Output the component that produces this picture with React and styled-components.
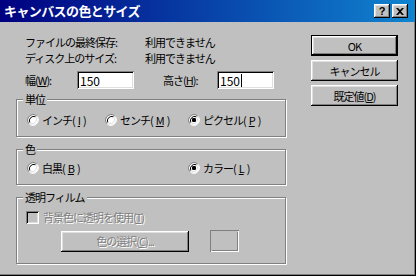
import React from "react";
import styled, { createGlobalStyle } from "styled-components";

const GlobalStyle = createGlobalStyle`
  html, body {
    margin: 0;
    padding: 0;
    background: #c0c0c0;
  }
  body {
    font-family: "Noto Sans CJK JP", "Noto Sans", sans-serif;
    font-size: 11px;
    color: #000;
  }
`;

const Window = styled.div`
  width: 416px;
  height: 276px;
  box-sizing: border-box;
  background: #c0c0c0;
  display: flex;
  flex-direction: column;
  border-right: 1px solid #000;
  border-bottom: 1px solid #000;
  box-shadow: inset -1px -1px #808080;
`;

const TitleBar = styled.div`
  height: 22px;
  flex: none;
  display: flex;
  align-items: center;
  justify-content: space-between;
  padding: 0 7px 0 4px;
  background: linear-gradient(to right, #000080, #1084d0);
  color: #fff;
`;

const TitleText = styled.span`
  font-size: 13px;
  font-weight: 700;
  letter-spacing: -0.6px;
  line-height: 22px;
`;

const CaptionButtons = styled.div`
  display: flex;
  gap: 2px;
`;

const CaptionButton = styled.div`
  width: 16px;
  height: 14px;
  box-sizing: border-box;
  background: #c0c0c0;
  color: #000;
  display: flex;
  align-items: center;
  justify-content: center;
  font-family: "Liberation Sans", sans-serif;
  font-size: 11px;
  font-weight: 700;
  box-shadow: inset -1px -1px #000, inset 1px 1px #fff, inset -2px -2px #808080,
    inset 2px 2px #dfdfdf;
`;

const Body = styled.div`
  flex: 1;
  display: grid;
  grid-template-columns: 270px 87px;
  column-gap: 25px;
  align-items: start;
  padding: 12px 0 0 16px;
  letter-spacing: -1px;
`;

const LeftCol = styled.div`
  display: flex;
  flex-direction: column;
`;

const Info = styled.div`
  display: grid;
  grid-template-columns: 120px auto;
  padding-left: 9px;
  line-height: 16px;
`;

const SizeRow = styled.div`
  display: flex;
  align-items: center;
  height: 18px;
  margin-top: 5px;
  padding-left: 9px;
`;

const FieldLabel = styled.span`
  width: ${(p) => p.$w}px;
  flex: none;
`;

const TextBox = styled.div`
  width: 57px;
  height: 18px;
  flex: none;
  box-sizing: border-box;
  display: flex;
  align-items: center;
  padding-left: 3px;
  background: #fff;
  font-size: 12px;
  letter-spacing: 0;
  box-shadow: inset 1px 1px #808080, inset -1px -1px #fff, inset 2px 2px #000,
    inset -2px -2px #dfdfdf;
`;

const Caret = styled.span`
  width: 1px;
  height: 13px;
  margin-left: 1px;
  background: #000;
`;

const Gap = styled.span`
  width: ${(p) => p.$w}px;
  flex: none;
`;

const Group = styled.fieldset`
  margin: ${(p) => p.$mt}px 0 0;
  padding: ${(p) => p.$pad};
  width: 270px;
  box-sizing: border-box;
  min-width: 0;
  border: 1px solid #808080;
  box-shadow: inset 1px 1px #fff, 1px 1px #fff;
`;

const Legend = styled.legend`
  margin-left: 6px;
  padding: 0 2px;
  line-height: 14px;
  background: #c0c0c0;
`;

const Options = styled.div`
  display: grid;
  grid-template-columns: ${(p) => p.$cols};
  padding-left: 10px;
  height: 14px;
  align-items: center;
`;

const Option = styled.label`
  display: flex;
  align-items: center;
  gap: 3px;
  white-space: nowrap;
`;

const CheckRow = styled.div`
  display: flex;
  align-items: center;
  gap: 4px;
  height: 14px;
  padding-left: 9px;
`;

const CheckBox = styled.span`
  width: 13px;
  height: 13px;
  flex: none;
  box-sizing: border-box;
  background: #c0c0c0;
  box-shadow: inset 1px 1px #808080, inset -1px -1px #fff, inset 2px 2px #000,
    inset -2px -2px #dfdfdf;
`;

const Disabled = styled.span`
  color: #808080;
  text-shadow: 1px 1px #fff;
`;

const PickRow = styled.div`
  display: flex;
  align-items: center;
  gap: 21px;
  margin-top: 6px;
  padding-left: 44px;
`;

const Button = styled.div`
  width: ${(p) => p.$w || 87}px;
  height: 21px;
  box-sizing: border-box;
  display: flex;
  align-items: center;
  justify-content: center;
  background: #c0c0c0;
  white-space: nowrap;
  box-shadow: ${(p) =>
    p.$default
      ? "inset 0 0 0 1px #000, inset -2px -2px #000, inset 2px 2px #fff, inset -3px -3px #808080, inset 3px 3px #dfdfdf"
      : "inset -1px -1px #000, inset 1px 1px #fff, inset -2px -2px #808080, inset 2px 2px #dfdfdf"};
`;

const Swatch = styled.div`
  width: 29px;
  height: 22px;
  box-sizing: border-box;
  box-shadow: inset 1px 1px #808080, inset -1px -1px #fff, inset 2px 2px #c0c0c0,
    inset -2px -2px #808080;
`;

const RightCol = styled.div`
  display: flex;
  flex-direction: column;
  gap: 4px;
  margin-top: 1px;
`;

function Radio({ checked }) {
  return (
    <svg width="12" height="12" viewBox="0 0 12 12">
      <circle cx="6" cy="6" r="5" fill="#fff" />
      <path d="M1.8 9.5 A5.5 5.5 0 0 1 9.5 1.8" fill="none" stroke="#808080" />
      <path d="M2.8 8.5 A4.3 4.3 0 0 1 8.5 2.8" fill="none" stroke="#000" />
      <path d="M10.2 2.5 A5.5 5.5 0 0 1 2.5 10.2" fill="none" stroke="#fff" />
      <path d="M9.2 3.5 A4.3 4.3 0 0 1 3.5 9.2" fill="none" stroke="#dfdfdf" />
      {checked && <rect x="4" y="4" width="4" height="4" rx="1.2" fill="#000" />}
    </svg>
  );
}

function CloseGlyph() {
  return (
    <svg width="8" height="7" viewBox="0 0 8 7">
      <path d="M0 0h2l2 2 2-2h2L5 3.5 8 7H6L4 5 2 7H0l3-3.5z" fill="#000" />
    </svg>
  );
}

export default function App() {
  return (
    <>
      <GlobalStyle />
      <Window>
        <TitleBar>
          <TitleText>キャンバスの色とサイズ</TitleText>
          <CaptionButtons>
            <CaptionButton>?</CaptionButton>
            <CaptionButton>
              <CloseGlyph />
            </CaptionButton>
          </CaptionButtons>
        </TitleBar>
        <Body>
          <LeftCol>
            <Info>
              <span>ファイルの最終保存:</span>
              <span>利用できません</span>
              <span>ディスク上のサイズ:</span>
              <span>利用できません</span>
            </Info>
            <SizeRow>
              <FieldLabel $w={52}>幅(<u>W</u>):</FieldLabel>
              <TextBox>150</TextBox>
              <Gap $w={29} />
              <FieldLabel $w={54}>高さ(<u>H</u>):</FieldLabel>
              <TextBox>
                150
                <Caret />
              </TextBox>
            </SizeRow>

            <Group $mt={3} $pad="6px 0 10px">
              <Legend>単位</Legend>
              <Options $cols="78px 83px auto">
                <Option>
                  <Radio />
                  インチ(<u>I</u>)
                </Option>
                <Option>
                  <Radio />
                  センチ(<u>M</u>)
                </Option>
                <Option>
                  <Radio checked />
                  ピクセル(<u>P</u>)
                </Option>
              </Options>
            </Group>

            <Group $mt={5} $pad="4px 0 10px">
              <Legend>色</Legend>
              <Options $cols="161px auto">
                <Option>
                  <Radio />
                  白黒(<u>B</u>)
                </Option>
                <Option>
                  <Radio checked />
                  カラー(<u>L</u>)
                </Option>
              </Options>
            </Group>

            <Group $mt={5} $pad="6px 0 11px">
              <Legend>透明フィルム</Legend>
              <CheckRow>
                <CheckBox />
                <Disabled>
                  背景色に透明を使用(<u>T</u>)
                </Disabled>
              </CheckRow>
              <PickRow>
                <Button $w={128}>
                  <Disabled>
                    色の選択(<u>C</u>)...
                  </Disabled>
                </Button>
                <Swatch />
              </PickRow>
            </Group>
          </LeftCol>

          <RightCol>
            <Button $default>OK</Button>
            <Button>キャンセル</Button>
            <Button>
              既定値(<u>D</u>)
            </Button>
          </RightCol>
        </Body>
      </Window>
    </>
  );
}
